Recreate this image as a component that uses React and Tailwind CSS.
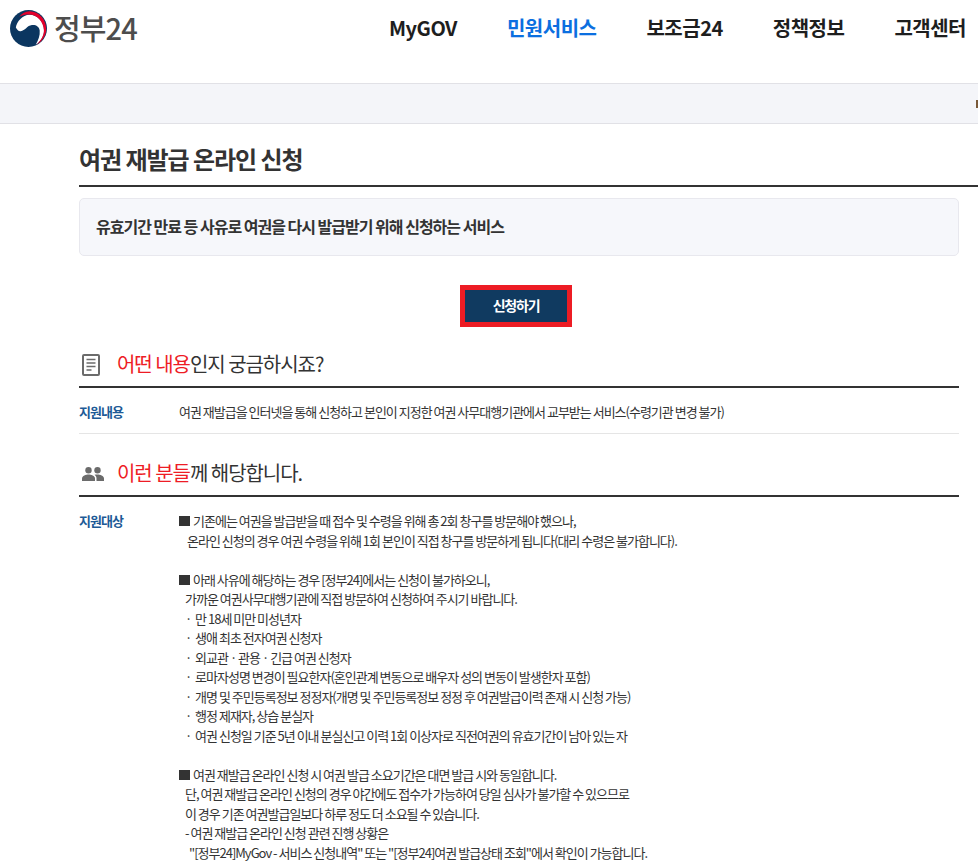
import React from 'react';

const FONT = "font-['Noto_Sans_CJK_KR','Noto_Sans',sans-serif]";

const Logo = () => (
    <svg width="37" height="37" viewBox="0 0 38 38" className="shrink-0">
        <circle cx="19" cy="19" r="19" fill="#0b3660" />
        {/* white swirl */}
        <path d="M6 18 C7 12 13 5 20 5 C28 5 35 12 35 21 C35 27 31.500 32.500 26.500 35.500 C29 31 31 26 30.500 21 C30 17 26.500 15 22.500 15.500 C17.500 16 15.500 21.500 11 21.800 C8.500 22 7 20 6 18 Z" fill="#fff" />
        {/* red crescent */}
        <path d="M9.500 7 C12 3.500 16 1.200 20 1.200 C30 1.200 37.200 10 37.200 19.500 C37.200 26 33 32.500 27 35.800 C32 31 35 26 34.800 20.500 C34.300 12 28 4.500 19.500 4.500 C16 4.500 12.500 5 9.500 7 Z" fill="#e4002b" />
    </svg>
);

const DocIcon = () => (
    <svg width="18" height="22" viewBox="0 0 18 22" fill="none" className="shrink-0">
        <rect x="1" y="1" width="16" height="20" rx="1" stroke="#6b6b6b" strokeWidth="2" />
        <path d="M4.500 5.500h9M4.500 9h9M4.500 12.500h9M4.500 16h5" stroke="#6b6b6b" strokeWidth="1.500" />
    </svg>
);

const PeopleIcon = () => (
    <svg width="22" height="14" viewBox="0 0 22 14" fill="#6b6b6b" className="shrink-0">
        <circle cx="6.500" cy="3.200" r="3.200" />
        <circle cx="15.500" cy="3.200" r="3.200" />
        <path d="M0 14v-2.500C0 9 4 7.600 6.500 7.600s6.500 1.400 6.500 3.900V14H0Z" />
        <path d="M15.500 7.600c2.500 0 6.500 1.400 6.500 3.900V14h-7.500v-2.500c0-1.700-.8-2.900-2-3.700 1-.1 2-.2 3-.2Z" />
    </svg>
);

const NavItem = ({ children, active }) => (
    <a className={`text-[20px] font-bold leading-none tracking-[-0.5px] ${active ? 'text-[#0b6fe0]' : 'text-[#1e1e1e]'}`}>{children}</a>
);

const SectionTitle = ({ icon, red, rest }) => (
    <div className="flex items-center h-[45px] border-b-2 border-[#333]">
        <div className="w-[38px] pl-[3px] flex items-center">{icon}</div>
        <h3 className="text-[20px] font-normal tracking-[-1.03px] text-[#333] pb-[2px]">
            <span className="text-[#ee1c25]">{red}</span>{rest}
        </h3>
    </div>
);

const Line = ({ children, className = '' }) => <p className={`whitespace-pre ${className}`}>{children}</p>;

const Mark = () => <span className="inline-block w-[11px] h-[10px] bg-[#333] mr-[3px]" />;

export default function App() {
    return (
        <div className={`${FONT} w-[978px] h-[868px] overflow-hidden bg-white text-[#333]`}>
            {/* Header */}
            <header className="h-[83px] flex items-start justify-between pl-[10px] pr-[12px] pt-[10px]">
                <div className="flex items-center gap-[7px] h-[37px]">
                    <Logo />
                    <span className="text-[29px] leading-none font-medium tracking-[-0.9px] text-[#4d4d4d] -mt-[2px]">정부24</span>
                </div>
                <nav className="flex gap-[50px] items-center h-[36px]">
                    <NavItem>MyGOV</NavItem>
                    <NavItem active>민원서비스</NavItem>
                    <NavItem>보조금24</NavItem>
                    <NavItem>정책정보</NavItem>
                    <NavItem>고객센터</NavItem>
                </nav>
            </header>

            {/* Breadcrumb band */}
            <div className="h-[41px] bg-[#f4f5f9] border-y border-[#e1e1e6] flex items-center justify-end">
                <span className="w-[2px] h-[8px] bg-[#7a5a3a]" />
            </div>

            <main className="pl-[79px]">
                <div className="h-[63px] border-b-2 border-[#333] flex items-center pt-[8px]">
                    <h2 className="text-[24px] font-bold tracking-[-1.05px] text-[#333]">여권 재발급 온라인 신청</h2>
                </div>

                <div className="w-[880px]">
                    <div className="mt-[11px] h-[58px] rounded-[5px] bg-[#f6f7fb] border border-[#e8e8ee] flex items-center px-[17px] pb-[2px]">
                        <p className="text-[16px] font-bold tracking-[-1px] text-[#333] -ml-[1px]">유효기간 만료 등 사유로 여권을 다시 발급받기 위해 신청하는 서비스</p>
                    </div>

                    <div className="flex justify-center mt-[29px] pr-[6px]">
                        <button className="w-[112px] h-[42px] pb-[2px] bg-[#103a60] border-[5px] border-[#ed1c24] text-white text-[14px] font-bold tracking-[-1.2px]">신청하기</button>
                    </div>

                    <div className="mt-[16px]">
                        <SectionTitle icon={<DocIcon />} red="어떤 내용" rest="인지 궁금하시죠?" />
                    </div>

                    <div className="flex border-b border-[#e5e5e5] h-[46px] pt-[14px] text-[13px] leading-[19.5px] tracking-[-1px]">
                        <div className="w-[100px] font-bold text-[#1d5a96]">지원내용</div>
                        <p>여권 재발급을 인터넷을 통해 신청하고 본인이 지정한 여권 사무대행기관에서 교부받는 서비스(수령기관 변경 불가)</p>
                    </div>

                    <div className="mt-[18px]">
                        <SectionTitle icon={<PeopleIcon />} red="이런 분들" rest="께 해당합니다." />
                    </div>

                    <div className="flex pt-[14px] text-[13px] leading-[19.5px] tracking-[-1px]">
                        <div className="w-[100px] font-bold text-[#1d5a96]">지원대상</div>
                        <div>
                            <Line><Mark />기존에는 여권을 발급받을 때 접수 및 수령을 위해 총 2회 창구를 방문해야 했으나,</Line>
                            <Line className="pl-[8px]">온라인 신청의 경우 여권 수령을 위해 1회 본인이 직접 창구를 방문하게 됩니다(대리 수령은 불가합니다).</Line>
                            <Line>{' '}</Line>
                            <Line><Mark />아래 사유에 해당하는 경우 [정부24]에서는 신청이 불가하오니,</Line>
                            <Line className="pl-[6px]">가까운 여권사무대행기관에 직접 방문하여 신청하여 주시기 바랍니다.</Line>
                            <Line className="pl-[6px]">·  만 18세 미만 미성년자</Line>
                            <Line className="pl-[6px]">·  생애 최초 전자여권 신청자</Line>
                            <Line className="pl-[6px]">·  외교관 · 관용 · 긴급 여권 신청자</Line>
                            <Line className="pl-[6px]">·  로마자성명 변경이 필요한자(혼인관계 변동으로 배우자 성의 변동이 발생한자 포함)</Line>
                            <Line className="pl-[6px]">·  개명 및 주민등록정보 정정자(개명 및 주민등록정보 정정 후 여권발급이력 존재 시 신청 가능)</Line>
                            <Line className="pl-[6px]">·  행정 제재자, 상습 분실자</Line>
                            <Line className="pl-[6px]">·  여권 신청일 기준 5년 이내 분실신고 이력 1회 이상자로 직전여권의 유효기간이 남아 있는 자</Line>
                            <Line>{' '}</Line>
                            <Line><Mark />여권 재발급 온라인 신청 시 여권 발급 소요기간은 대면 발급 시와 동일합니다.</Line>
                            <Line className="pl-[6px]">단, 여권 재발급 온라인 신청의 경우 야간에도 접수가 가능하여 당일 심사가 불가할 수 있으므로</Line>
                            <Line className="pl-[6px]">이 경우 기존 여권발급일보다 하루 정도 더 소요될 수 있습니다.</Line>
                            <Line className="pl-[6px]">- 여권 재발급 온라인 신청 관련 진행 상황은</Line>
                            <Line className="pl-[10px]">"[정부24]MyGov - 서비스 신청내역" 또는 "[정부24]여권 발급상태 조회"에서 확인이 가능합니다.</Line>
                        </div>
                    </div>
                </div>
            </main>
        </div>
    );
}
